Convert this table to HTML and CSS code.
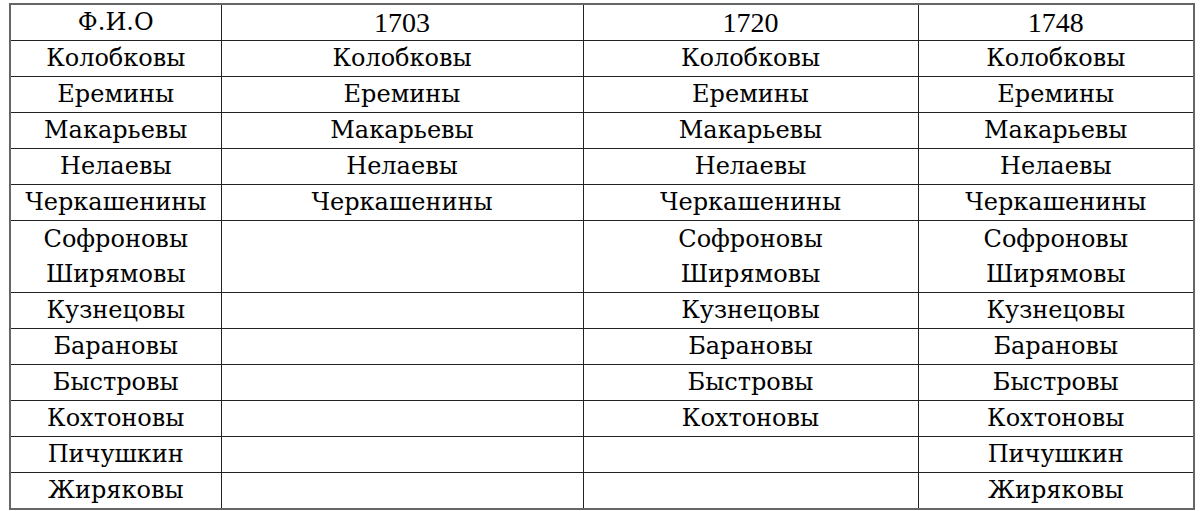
FILE: index.html
```html
<!DOCTYPE html>
<html lang="ru">
<head>
<meta charset="utf-8">
<link rel="stylesheet" href="styles.css">
</head>
<body>
<table class="grid">
  <colgroup>
    <col class="c1"><col class="c2"><col class="c3"><col class="c4">
  </colgroup>
  <tr><td>Ф.И.О</td><td class="num">1703</td><td class="num">1720</td><td class="num">1748</td></tr>
  <tr><td>Колобковы</td><td>Колобковы</td><td>Колобковы</td><td>Колобковы</td></tr>
  <tr><td>Еремины</td><td>Еремины</td><td>Еремины</td><td>Еремины</td></tr>
  <tr><td>Макарьевы</td><td>Макарьевы</td><td>Макарьевы</td><td>Макарьевы</td></tr>
  <tr><td>Нелаевы</td><td>Нелаевы</td><td>Нелаевы</td><td>Нелаевы</td></tr>
  <tr><td>Черкашенины</td><td>Черкашенины</td><td>Черкашенины</td><td>Черкашенины</td></tr>
  <tr class="tall"><td>Софроновы<br>Ширямовы</td><td></td><td>Софроновы<br>Ширямовы</td><td>Софроновы<br>Ширямовы</td></tr>
  <tr><td>Кузнецовы</td><td></td><td>Кузнецовы</td><td>Кузнецовы</td></tr>
  <tr><td>Барановы</td><td></td><td>Барановы</td><td>Барановы</td></tr>
  <tr><td>Быстровы</td><td></td><td>Быстровы</td><td>Быстровы</td></tr>
  <tr><td>Кохтоновы</td><td></td><td>Кохтоновы</td><td>Кохтоновы</td></tr>
  <tr><td>Пичушкин</td><td></td><td></td><td>Пичушкин</td></tr>
  <tr><td>Жиряковы</td><td></td><td></td><td>Жиряковы</td></tr>
</table>
</body>
</html>
```
FILE: styles.css
```css
html, body {
  margin: 0;
  padding: 0;
  background: #fff;
}
body {
  padding: 3px 0 0 9px;
}
.grid {
  border-collapse: collapse;
  table-layout: fixed;
  width: 1184px;
  font-family: "DejaVu Serif", serif;
  font-size: 24px;
  color: #000;
  border: 2px solid #666;
}
.grid td.num {
  font-family: "Liberation Serif", "DejaVu Serif", serif;
  font-size: 28px;
}
.c1 { width: 211px; }
.c2 { width: 362px; }
.c3 { width: 335px; }
.c4 { width: 276px; }
.grid td {
  border: 1px solid #222;
  height: 35px;
  padding: 0;
  text-align: center;
  vertical-align: middle;
  line-height: 35px;
  white-space: nowrap;
}
.grid tr.tall td {
  height: 71px;
}
```
